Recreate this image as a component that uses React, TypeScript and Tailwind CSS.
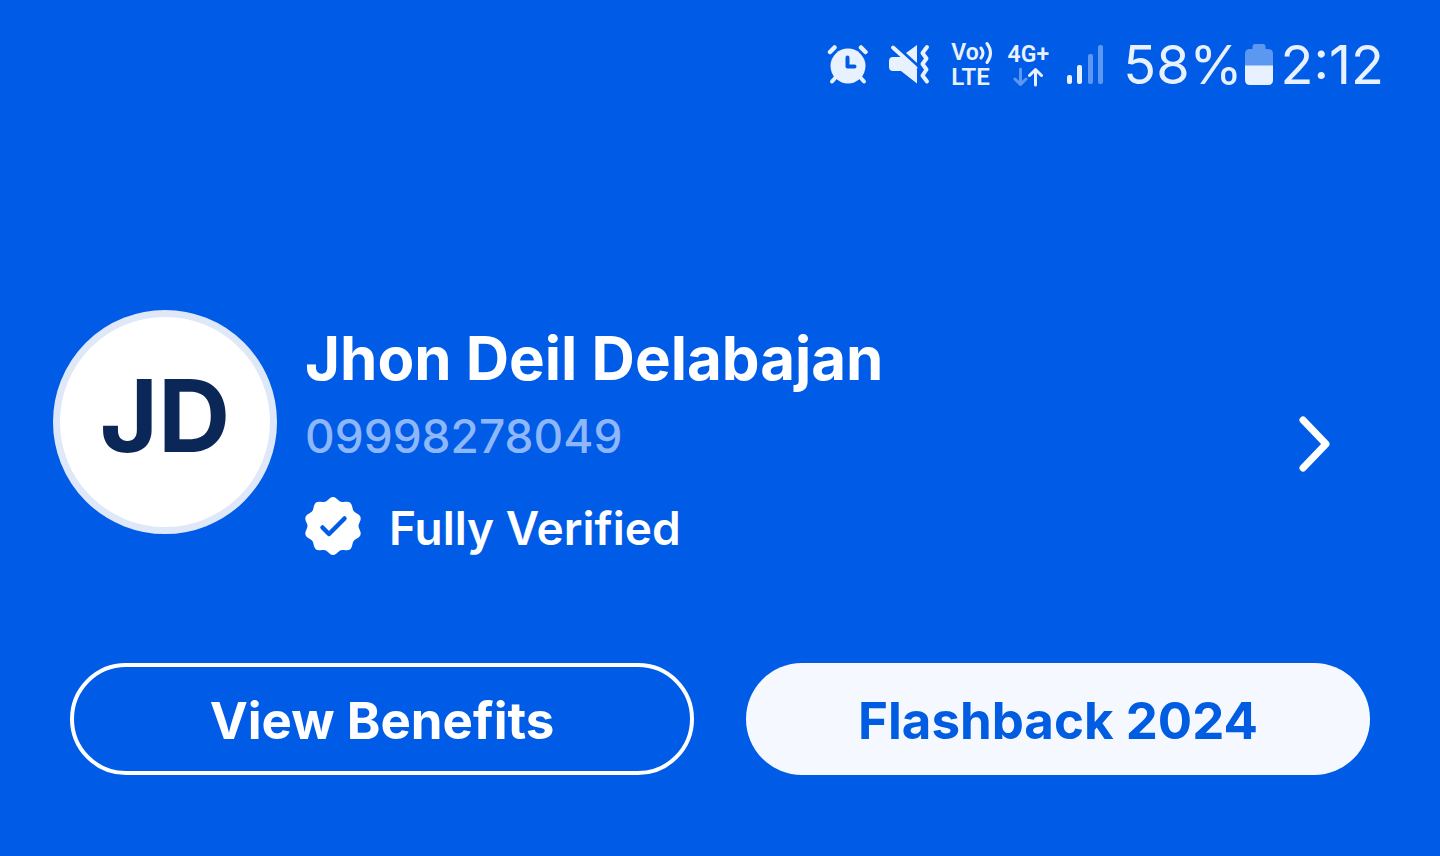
const INK = '#e8f1ff'
const FADED = '#5c97f1'

// outline of the ten-lobed seal behind the check mark
const SEAL = Array.from({ length: 120 }, (_, i) => {
  const a = (i / 120) * Math.PI * 2
  const r = 27.2 + 1.7 * Math.cos(10 * a)
  return `${(r * Math.sin(a)).toFixed(2)},${(-r * Math.cos(a)).toFixed(2)}`
}).join(' ')

function AlarmIcon() {
  return (
    <svg width="42" height="42" viewBox="0 0 42 42" fill="none" stroke={INK} strokeLinecap="round">
      <circle cx="21" cy="22" r="17.500" fill={INK} stroke="none" />
      <path d="M3 8 7.500 3.500M34 3.500l4.500 4.500" strokeWidth="4.500" />
      <path d="M9 33l-4 4.500M33 33l4 4.500" strokeWidth="4" />
      <path d="M20.500 13.500v9h7" stroke="#005ce6" strokeWidth="4" strokeLinejoin="round" />
    </svg>
  )
}

function MuteVibrateIcon() {
  return (
    <svg width="42" height="42" viewBox="0 0 42 42" fill="none">
      <path d="M0 17q0-4 4-4h8L28 26v13.500L12 27H4q-4 0-4-4z" fill={INK} />
      <path d="M28 1v18L17 9z" fill={INK} />
      <path d="M4 3.500 26.500 24" stroke={INK} strokeWidth="4" strokeLinecap="round" />
      <path d="M38 3l-4.500 6 4 5.500-4 5.500 4 5.500-4 6L38 37.500" stroke={INK} strokeWidth="4" strokeLinecap="round" strokeLinejoin="round" />
    </svg>
  )
}

function VolteIcon() {
  return (
    <div className="flex w-[42px] flex-col font-[Roboto] font-semibold">
      <div className="flex items-center text-[23px] leading-[24px]">
        Vo
        <svg width="14" height="24" viewBox="0 0 14 24" fill="none" stroke={INK} strokeWidth="3" strokeLinecap="round">
          <path d="M2 7q4 5 0 10M8 2.500q7 9.500 0 19" />
        </svg>
      </div>
      <span className="text-[24px] leading-[24px]">LTE</span>
    </div>
  )
}

function MobileDataIcon() {
  return (
    <div className="flex w-[42px] flex-col items-center font-[Roboto] font-semibold">
      <span className="text-[23px] leading-[24px]">4G+</span>
      <svg width="30" height="20" viewBox="0 0 30 20" fill="none" strokeWidth="3" strokeLinecap="round" strokeLinejoin="round">
        <path d="M7.500 2v15M2 12l5.500 5.500L13 12" stroke={FADED} />
        <path d="M22.500 18V3M16.500 8.500 22.500 2.500l6 6" stroke={INK} />
      </svg>
    </div>
  )
}

function SignalIcon() {
  return (
    <svg width="36" height="42" viewBox="0 0 36 42">
      <rect x="0" y="31" width="5" height="9" rx="2" fill={INK} />
      <rect x="10" y="21" width="5" height="19" rx="2" fill={INK} />
      <rect x="21" y="10" width="5" height="30" rx="2" fill={FADED} />
      <rect x="31" y="1" width="5" height="39" rx="2" fill={FADED} />
    </svg>
  )
}

function BatteryIcon() {
  return (
    <svg width="28" height="42" viewBox="0 0 28 42">
      <path d="M0 22V10q0-5 5-5h2.500V2.500Q7.500 0 10 0h8q2.500 0 2.500 2.500V5H23q5 0 5 5v12z" fill={FADED} />
      <path d="M0 21.500h28V36q0 5-5 5H5q-5 0-5-5z" fill={INK} />
    </svg>
  )
}

function VerifiedBadge() {
  return (
    <svg width="56" height="62" viewBox="-28 -29 56 62">
      <polygon points={SEAL} fill="white" />
      <path d="M-10.500 1.500-4 8 11.500-7.500" fill="none" stroke="#005ce6" strokeWidth="4.500" strokeLinecap="round" strokeLinejoin="round" />
    </svg>
  )
}

export default function App() {
  return (
    <div className="min-h-screen bg-[#005ce6] font-[Inter,sans-serif] text-white">
      <header className="flex h-32 items-center justify-end pt-0.5 pr-14 text-[#e8f1ff]">
        <div className="flex items-center gap-5">
          <AlarmIcon />
          <MuteVibrateIcon />
          <VolteIcon />
        </div>
        <div className="ml-3.5 flex items-center gap-[18px]">
          <MobileDataIcon />
          <SignalIcon />
        </div>
        <span className="ml-5 text-[54px] leading-none">58%</span>
        <div className="mr-2 ml-0.5">
          <BatteryIcon />
        </div>
        <time className="text-[54px] leading-none">2:12</time>
      </header>

      <main className="px-[70px] pt-[182px]">
        <section className="-ml-[17px] flex items-start gap-7">
          <div className="flex size-56 shrink-0 items-center justify-center rounded-full border-[7px] border-[#dfe8f8] bg-white pb-3 text-[100px] leading-none font-bold text-[#0a2757]">
            JD
          </div>
          <div className="flex-1 pt-3">
            <h1 className="text-[60px] leading-[72px] font-bold">Jhon Deil Delabajan</h1>
            <p className="mt-1.5 text-[46px] leading-[72px] font-medium text-[#8db7fa]">09998278049</p>
            <div className="mt-5 flex items-center gap-7">
              <VerifiedBadge />
              <span className="text-[46px] leading-[72px] font-semibold">Fully Verified</span>
            </div>
          </div>
          <button type="button" aria-label="Open profile" className="mt-26 mr-9">
            <svg width="40" height="60" viewBox="0 0 40 60" fill="none" stroke="white" strokeWidth="7" strokeLinecap="round" strokeLinejoin="round">
              <path d="M9 6l23 24L9 54" />
            </svg>
          </button>
        </section>

        <div className="mt-[99px] grid grid-cols-2 gap-[52px] text-[51px] font-bold">
          <button type="button" className="h-28 rounded-full border-4 border-white pt-1">
            View Benefits
          </button>
          <button type="button" className="h-28 rounded-full bg-[#f5f9ff] pt-1 text-[#005ce0]">
            Flashback 2024
          </button>
        </div>
      </main>
    </div>
  )
}
